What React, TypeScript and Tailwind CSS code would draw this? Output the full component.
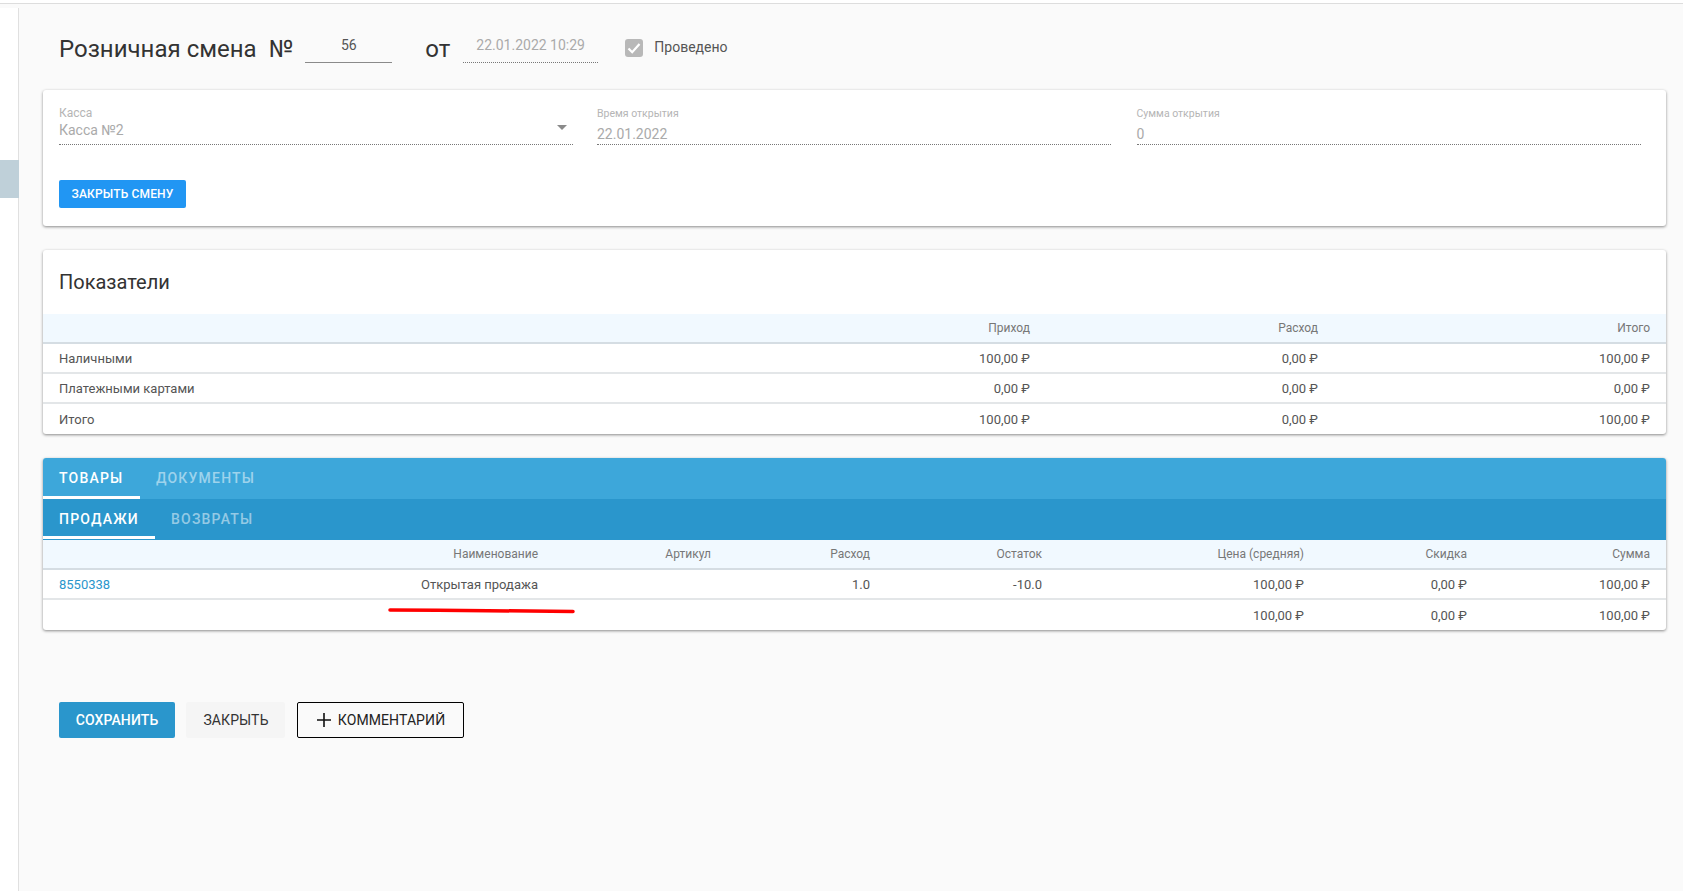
const font = "font-['Roboto','Liberation_Sans',sans-serif]";

function Field({ label, value, className, arrow }: { label: string; value: string; className: string; arrow?: boolean }) {
  return (
    <div className={`relative flex h-[39px] flex-col border-b border-dotted border-[#777] ${className}`}>
      <div className={`${arrow ? "text-xs" : "pt-[1px] text-[10.5px]"} leading-[14px] text-[#b5b5b5]`}>{label}</div>
      <div className={`${arrow ? "mt-[1px]" : "mt-[4px]"} text-sm leading-[18px] text-[#aaaaaa]`}>{value}</div>
      {arrow && <div className="absolute right-[6px] top-[19px] h-0 w-0 border-x-[5px] border-t-[5px] border-x-transparent border-t-[#8a8a8a]" />}
    </div>
  );
}

const metrics = [
  ["Наличными", "100,00 ₽", "0,00 ₽", "100,00 ₽"],
  ["Платежными картами", "0,00 ₽", "0,00 ₽", "0,00 ₽"],
  ["Итого", "100,00 ₽", "0,00 ₽", "100,00 ₽"],
];

const metricCols = "grid grid-cols-[699px_288px_288px_348px] items-center";
const goodsCols = "grid grid-cols-[157px_338px_173px_159px_172px_262px_163px_199px] items-center";

export default function App() {
  return (
    <div className={`${font} flex min-h-[891px] flex-col bg-white text-[#333]`}>
      <div className="h-[3px] bg-white" />
      <div className="h-[1px] bg-[#dddddd]" />
      <div className="flex min-h-[887px] flex-1 bg-[#fafafa]">
        <aside className="mt-[4px] w-[19px] shrink-0 border-r border-[#e0e0e0] bg-white pt-[152px]">
          <div className="-mr-[1px] h-[38px] bg-[#bfd0d9]" />
        </aside>
        <main className="w-[1664px] pl-[24px] pr-[17px]">
          <div className="flex h-[86px] items-start pl-[16px] pt-[28px]">
            <div className="flex items-start">
              <h1 className="text-2xl font-normal leading-[34px] text-[#333]">Розничная смена</h1>
              <span className="ml-[12px] text-2xl font-normal leading-[34px] text-[#333]">№</span>
              <div className="ml-[12px] h-[31px] w-[87px] border-b border-[#8a8a8a] text-center text-sm leading-[26px] text-[#555]">56</div>
              <span className="ml-[33px] text-2xl font-normal leading-[34px] text-[#333]">от</span>
              <div className="ml-[13px] h-[31px] w-[135px] border-b border-dotted border-[#777] pl-[13px] text-sm leading-[26px] text-[#aaaaaa]">22.01.2022 10:29</div>
              <div className="ml-[27px] mt-[7px] flex h-[18px] w-[18px] items-center justify-center rounded-[3px] bg-[#b8b8b8]">
                <svg viewBox="0 0 18 18" className="h-[18px] w-[18px]" fill="none" stroke="#ffffff" strokeWidth="2.2">
                  <path d="M3.5 9.5 L7.2 13.2 L14.5 5" />
                </svg>
              </div>
              <span className="ml-[11px] mt-[5px] text-sm leading-[20px] text-[#555]">Проведено</span>
            </div>
          </div>

          <section className="h-[136px] rounded-[3px] bg-white px-[16px] pt-[16px] shadow-[0_1px_3px_rgba(0,0,0,0.45)]">
            <div className="flex">
              <Field label="Касса" value="Касса №2" className="w-[514px]" arrow />
              <Field label="Время открытия" value="22.01.2022" className="ml-[24px] w-[514px]" />
              <Field label="Сумма открытия" value="0" className="ml-[25.5px] w-[504.5px]" />
            </div>
            <button className="mt-[35px] h-[28px] w-[127px] rounded-[2px] bg-[#2196f3] text-xs font-medium tracking-[0.15px] text-white">ЗАКРЫТЬ СМЕНУ</button>
          </section>

          <section className="mt-[24px] h-[184px] overflow-hidden rounded-[3px] bg-white shadow-[0_1px_3px_rgba(0,0,0,0.45)]">
            <h2 className="h-[64px] pl-[16px] pt-[19px] text-xl font-normal leading-[26px] text-[#333]">Показатели</h2>
            <div className={`${metricCols} h-[30px] border-b-2 border-[#d5dde3] bg-[#f1f9ff] text-xs text-[#777]`}>
              <div />
              <div className="text-right">Приход</div>
              <div className="text-right">Расход</div>
              <div className="pr-[16px] text-right">Итого</div>
            </div>
            {metrics.map((r, i) => (
              <div key={r[0]} className={`${metricCols} ${i < 2 ? "h-[30px] border-b-2 border-[#e3e6e8]" : "h-[30px]"} pt-[1px] text-[13px] text-[#555]`}>
                <div className="pl-[16px]">{r[0]}</div>
                <div className="text-right">{r[1]}</div>
                <div className="text-right">{r[2]}</div>
                <div className="pr-[16px] text-right">{r[3]}</div>
              </div>
            ))}
          </section>

          <section className="relative mt-[24px] h-[172px] overflow-hidden rounded-[3px] bg-white shadow-[0_1px_3px_rgba(0,0,0,0.45)]">
            <div className="flex h-[41px] bg-[#3da7da] text-sm font-medium tracking-[1.2px]">
              <div className="flex h-[41px] w-[97px] items-center border-b-[3px] border-white pl-[16px] pt-[1px] text-white">ТОВАРЫ</div>
              <div className="flex h-[41px] items-center pb-[2px] pl-[16px] text-white/50">ДОКУМЕНТЫ</div>
            </div>
            <div className="flex h-[41px] bg-[#2a96cc] text-sm font-medium tracking-[1.2px]">
              <div className="flex h-[40px] w-[112px] items-center border-b-[3px] border-white pl-[16px] pt-[2px] text-white">ПРОДАЖИ</div>
              <div className="flex h-[41px] items-center pb-[1px] pl-[16px] text-white/50">ВОЗВРАТЫ</div>
            </div>
            <div className={`${goodsCols} h-[30px] border-b-2 border-[#d5dde3] bg-[#f1f9ff] text-xs text-[#777]`}>
              <div />
              <div className="text-right">Наименование</div>
              <div className="text-right">Артикул</div>
              <div className="text-right">Расход</div>
              <div className="text-right">Остаток</div>
              <div className="text-right">Цена (средняя)</div>
              <div className="text-right">Скидка</div>
              <div className="pr-[16px] text-right">Сумма</div>
            </div>
            <div className={`${goodsCols} h-[30px] border-b-2 border-[#e3e6e8] pt-[1px] text-[13px] text-[#555]`}>
              <div className="pl-[16px] text-[#2a96cc]">8550338</div>
              <div className="text-right">Открытая продажа</div>
              <div />
              <div className="text-right">1.0</div>
              <div className="text-right">-10.0</div>
              <div className="text-right">100,00 ₽</div>
              <div className="text-right">0,00 ₽</div>
              <div className="pr-[16px] text-right">100,00 ₽</div>
            </div>
            <div className={`${goodsCols} h-[30px] pt-[2px] text-[13px] text-[#555]`}>
              <div /><div /><div /><div /><div />
              <div className="text-right">100,00 ₽</div>
              <div className="text-right">0,00 ₽</div>
              <div className="pr-[16px] text-right">100,00 ₽</div>
            </div>
            <svg className="absolute left-[345px] top-[148px] h-[8px] w-[190px]" viewBox="0 0 190 8" fill="none">
              <path d="M2 4 L50 4.3 L100 4.7 L185 5.4" stroke="#ff0000" strokeWidth="3.5" strokeLinecap="round" />
            </svg>
          </section>

          <div className="mt-[72px] flex pl-[16px]">
            <button className="h-[36px] w-[116px] rounded-[2px] bg-[#2a96cc] text-sm font-medium tracking-[0.1px] text-white">СОХРАНИТЬ</button>
            <button className="ml-[11px] h-[36px] w-[99px] rounded-[2px] bg-[#f5f5f5] pl-[1px] text-sm tracking-[0.1px] text-[#333]">ЗАКРЫТЬ</button>
            <button className="ml-[12px] flex h-[36px] w-[167px] items-center justify-center gap-[6px] rounded-[2px] border border-black text-sm tracking-[0.1px] text-[#222]">
              <svg viewBox="0 0 16 16" className="h-[16px] w-[16px]" stroke="#111" strokeWidth="1.6" fill="none">
                <path d="M8 1 V15 M1 8 H15" />
              </svg>
              КОММЕНТАРИЙ
            </button>
          </div>
        </main>
      </div>
    </div>
  );
}
